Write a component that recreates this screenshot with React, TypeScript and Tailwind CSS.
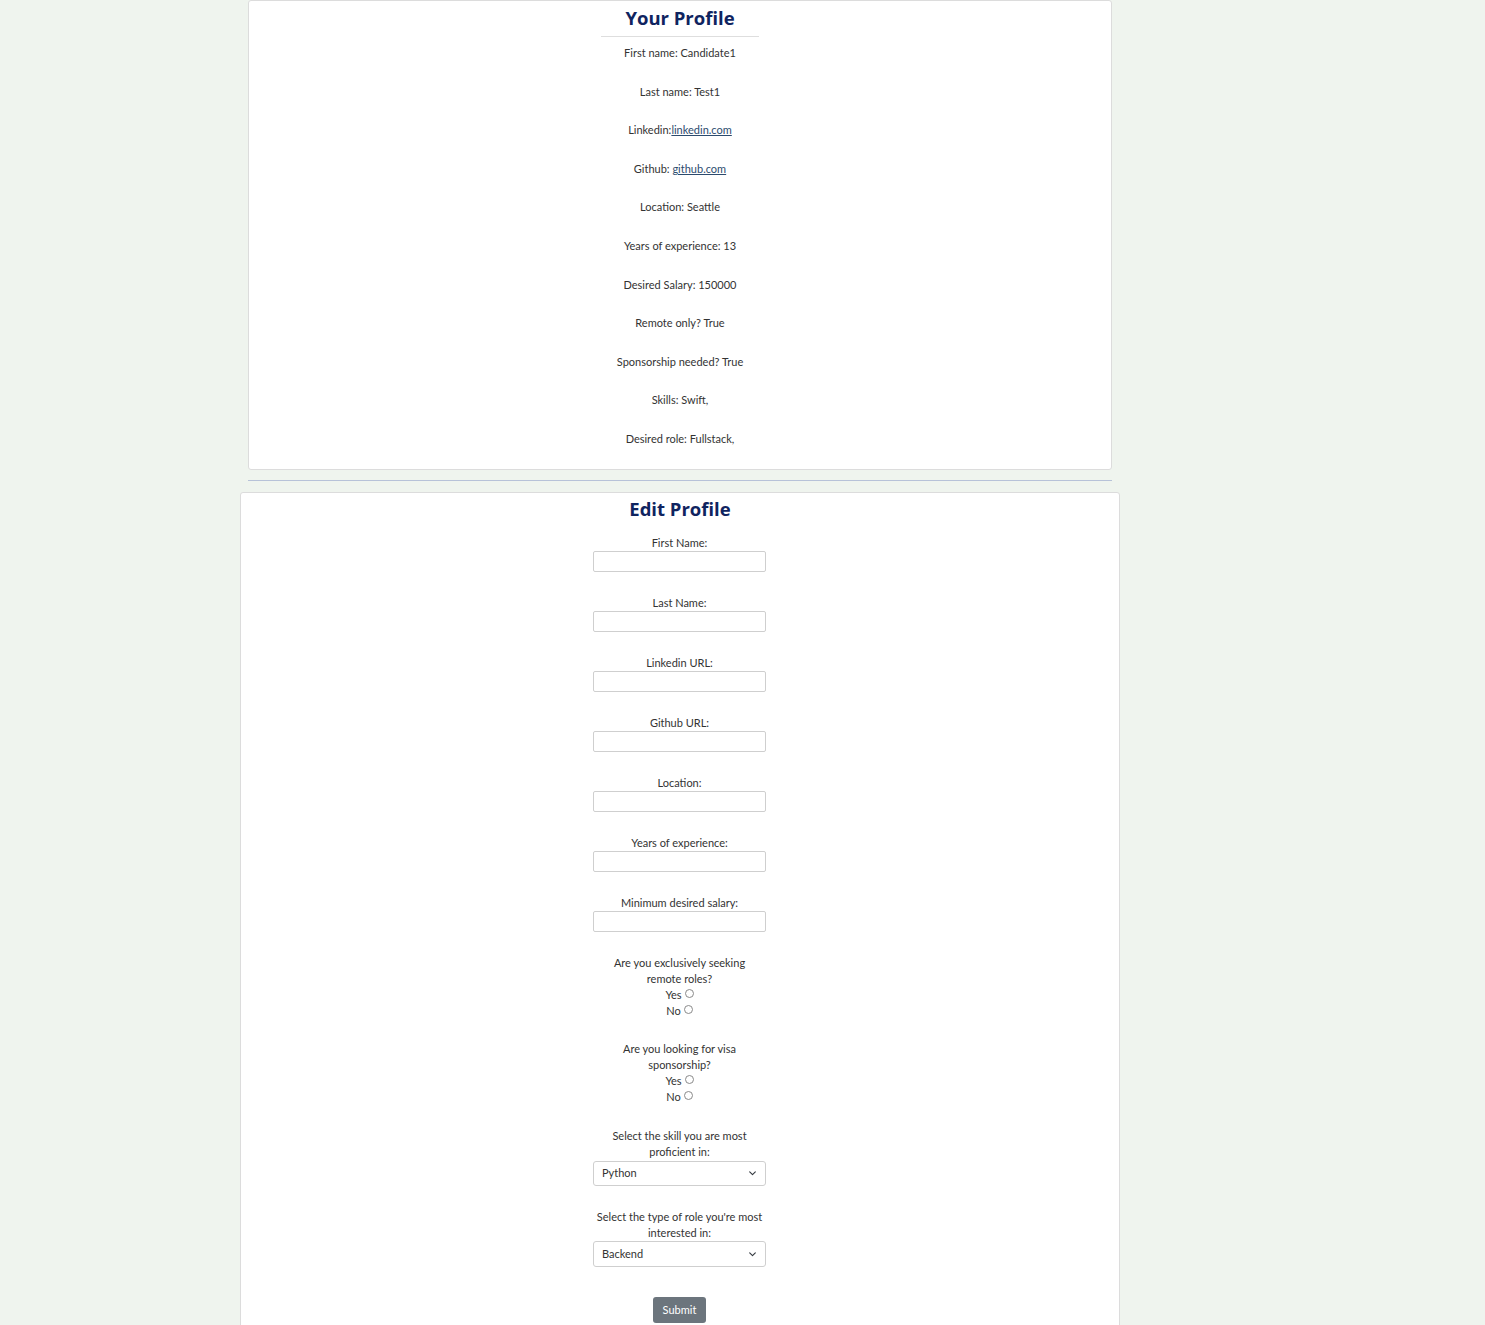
const profile = [
  { label: 'First name: ', value: 'Candidate1' },
  { label: 'Last name: ', value: 'Test1' },
  { label: 'Linkedin:', value: 'linkedin.com', link: true },
  { label: 'Github: ', value: 'github.com', link: true },
  { label: 'Location: ', value: 'Seattle' },
  { label: 'Years of experience: ', value: '13' },
  { label: 'Desired Salary: ', value: '150000' },
  { label: 'Remote only? ', value: 'True' },
  { label: 'Sponsorship needed? ', value: 'True' },
  { label: 'Skills: ', value: 'Swift,' },
  { label: 'Desired role: ', value: 'Fullstack,' },
];

const textFields = [
  'First Name:',
  'Last Name:',
  'Linkedin URL:',
  'Github URL:',
  'Location:',
  'Years of experience:',
  'Minimum desired salary:',
];

function Radio({ name, label }: { name: string; label: string }) {
  return (
    <label className="flex items-center justify-center h-[16px] leading-[16px]">
      {label}
      <input
        type="radio"
        name={name}
        className="appearance-none w-[9px] h-[9px] ml-[3px] mb-[3px] rounded-full border border-[#8a8a8a] bg-white"
      />
    </label>
  );
}

function Chevron() {
  return (
    <svg
      className="absolute right-[9px] top-1/2 -translate-y-1/2 w-[9px] h-[9px] pointer-events-none"
      viewBox="0 0 16 16"
      fill="none"
      stroke="#343a40"
      strokeWidth="2"
      strokeLinecap="round"
      strokeLinejoin="round"
    >
      <path d="M3 6l5 5 5-5" />
    </svg>
  );
}

function SelectBox({ value, options, h }: { value: string; options: string[]; h: string }) {
  return (
    <div className={`relative w-[173px] ${h}`}>
      <select
        defaultValue={value}
        className="appearance-none w-full h-full border border-[#cfcfcf] rounded-[3px] bg-white pl-[8px] text-[11px] text-[#333] outline-none"
      >
        {options.map((o) => (
          <option key={o}>{o}</option>
        ))}
      </select>
      <Chevron />
    </div>
  );
}

export default function App() {
  return (
    <div className="min-h-screen bg-[#eff4ee] text-[#333] text-[11px] font-['Lato','Liberation_Sans',sans-serif]">
      <div className="w-[880px] ml-[240px] flex flex-col items-center pb-[20px]">
        {/* profile card */}
        <div className="w-[864px] bg-white border border-[#dcdcdc] rounded-[3px] flex flex-col items-center pt-[5px] pb-[22px]">
          <h2 className="text-[18.5px] leading-[24px] font-bold text-[#0f2460] font-['Open_Sans',sans-serif]">
            Your Profile
          </h2>
          <div className="w-[158px] border-t border-[#dedede] mt-[6px]" />
          <div className="flex flex-col items-center gap-[22.6px] mt-[8px]">
            {profile.map((p) => (
              <p key={p.label} className="leading-[16px]">
                {p.label}
                {p.link ? (
                  <a href="#" className="underline text-[#2c4b6e]">
                    {p.value}
                  </a>
                ) : (
                  p.value
                )}
              </p>
            ))}
          </div>
        </div>

        <div className="w-[864px] border-t border-[#b7c2d8] mt-[10px] mb-[11px]" />

        {/* edit form */}
        <div className="w-[880px] bg-white border border-[#dcdcdc] rounded-[3px] flex flex-col items-center pt-[4px] pb-[30px]">
          <h2 className="text-[18.5px] leading-[24px] font-bold text-[#0f2460] font-['Open_Sans',sans-serif]">
            Edit Profile
          </h2>
          <form className="flex flex-col items-center mt-[14px] mr-[1px]">
            {textFields.map((f) => (
              <div key={f} className="flex flex-col items-center mb-[23px]">
                <label className="leading-[16px]">{f}</label>
                <input
                  type="text"
                  className="w-[173px] h-[21px] border border-[#cfcfcf] rounded-[2px] bg-white outline-none"
                />
              </div>
            ))}

            <div className="flex flex-col items-center mb-[22px] text-center">
              <p className="leading-[16px]">
                Are you exclusively seeking
                <br />
                remote roles?
              </p>
              <Radio name="remote" label="Yes" />
              <Radio name="remote" label="No" />
            </div>

            <div className="flex flex-col items-center mb-[23px] text-center">
              <p className="leading-[16px]">
                Are you looking for visa
                <br />
                sponsorship?
              </p>
              <Radio name="visa" label="Yes" />
              <Radio name="visa" label="No" />
            </div>

            <div className="flex flex-col items-center mb-[23px] text-center">
              <p className="leading-[16px] mb-[1px]">
                Select the skill you are most
                <br />
                proficient in:
              </p>
              <SelectBox value="Python" options={['Python', 'Swift', 'JavaScript', 'Java']} h="h-[25px]" />
            </div>

            <div className="flex flex-col items-center text-center">
              <p className="leading-[16px]">
                Select the type of role you're most
                <br />
                interested in:
              </p>
              <SelectBox value="Backend" options={['Backend', 'Frontend', 'Fullstack']} h="h-[26px]" />
            </div>

            <button
              type="button"
              className="mt-[30px] w-[53px] h-[26px] bg-[#6c757d] text-white text-[11px] rounded-[3px]"
            >
              Submit
            </button>
          </form>
        </div>
      </div>
    </div>
  );
}
